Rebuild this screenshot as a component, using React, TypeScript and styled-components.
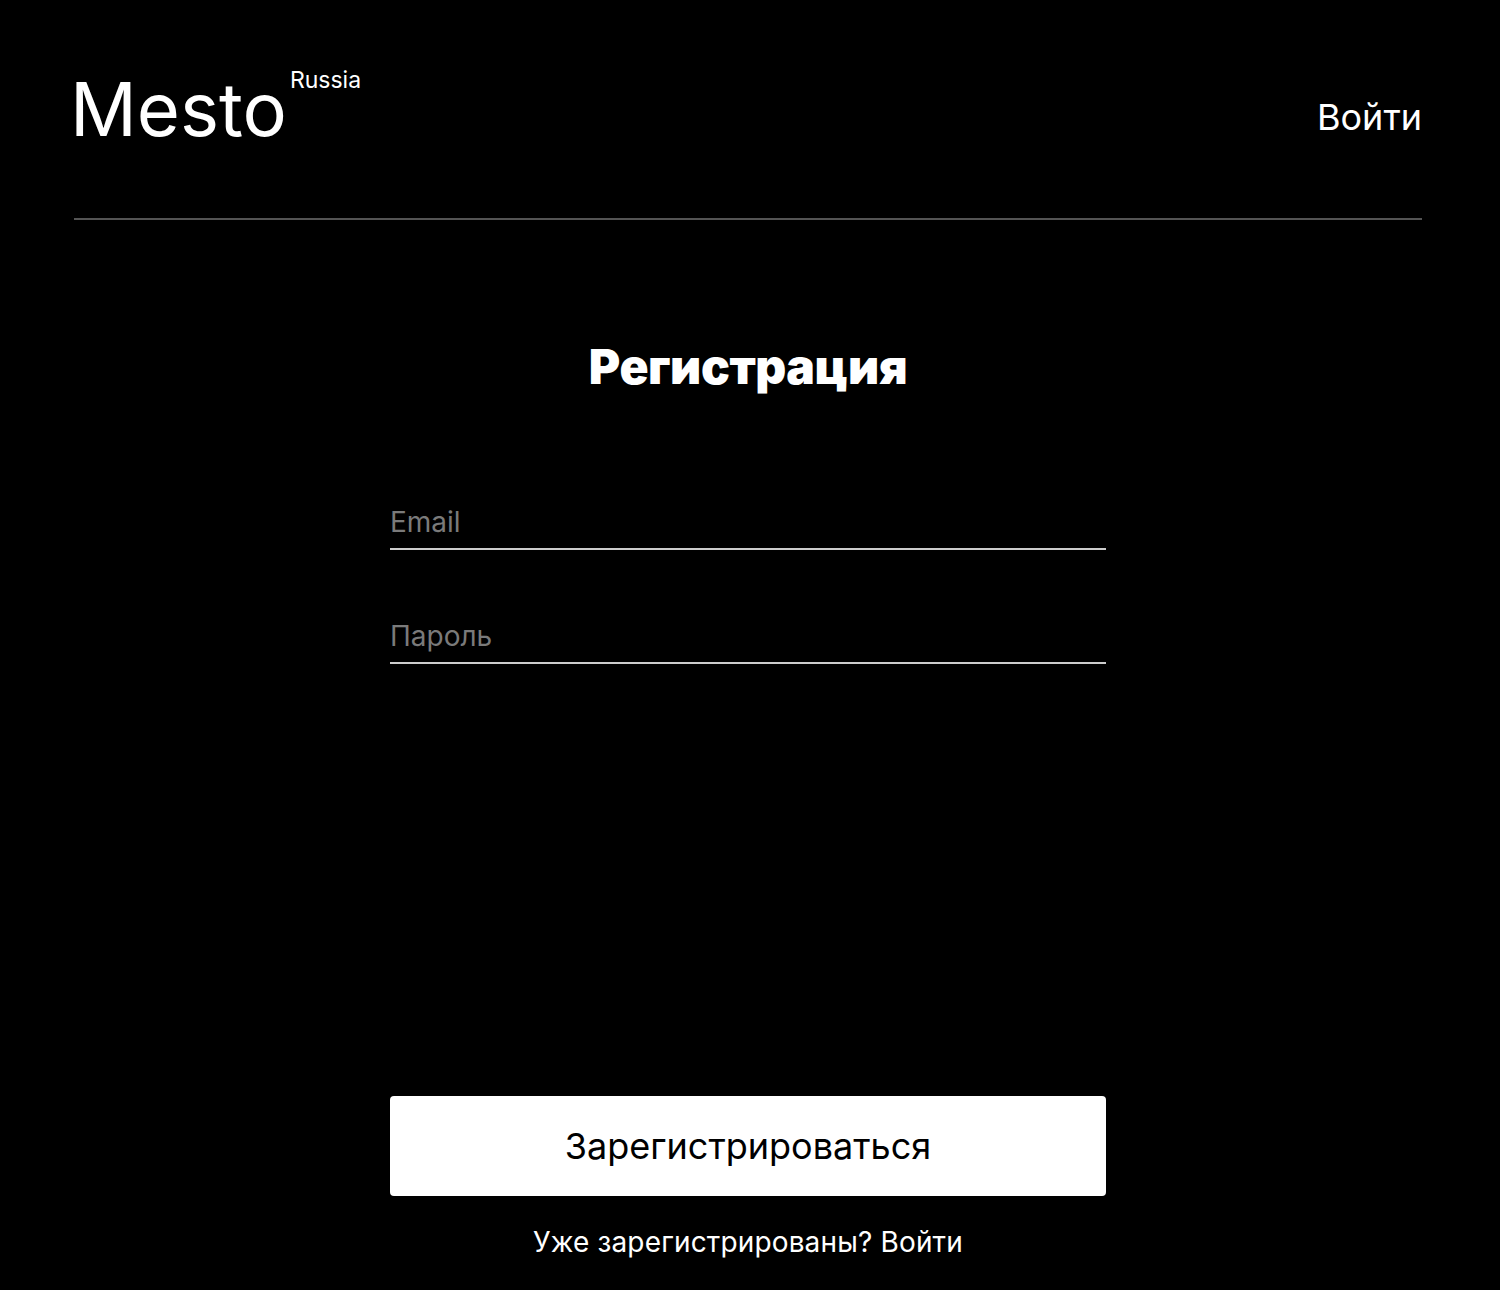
import React from "react";
import styled, { createGlobalStyle } from "styled-components";

const Global = createGlobalStyle`
  html, body { margin: 0; padding: 0; background: #000; }
  body { font-family: Inter, "Noto Sans", sans-serif; color: #fff; -webkit-font-smoothing: antialiased; }
  * { box-sizing: border-box; }
`;

const Page = styled.div`
  min-height: 1290px;
  background: #000;
  padding: 0 78px 0 74px;
`;

const Header = styled.header`
  display: flex;
  justify-content: space-between;
  align-items: flex-start;
  padding-top: 70px;
  padding-bottom: 72px;
  border-bottom: 2px solid #545454;
`;

const Logo = styled.div`
  display: flex;
  align-items: flex-start;
  margin-left: -4px;
`;

const LogoText = styled.span`
  font-size: 74px;
  line-height: 74px;
  font-weight: 400;
  margin-top: 2px;
`;

const LogoSup = styled.span`
  font-size: 23px;
  line-height: 23px;
  margin-top: -1px;
  margin-left: 3px;
`;

const HeaderLink = styled.a`
  color: #fff;
  text-decoration: none;
  font-size: 36px;
  line-height: 36px;
  margin-top: 29px;
`;

const Form = styled.form`
  width: 716px;
  margin: 0 auto;
  display: flex;
  flex-direction: column;
`;

const Title = styled.h1`
  margin: 123px 0 0;
  font-size: 48px;
  line-height: 48px;
  font-weight: 900;
  letter-spacing: -0.4px;
  text-align: center;
`;

const Input = styled.input<{ $first?: boolean }>`
  margin-top: ${(p) => (p.$first ? "114px" : "69px")};
  width: 100%;
  height: 45px;
  padding: 0 0 9px;
  background: transparent;
  border: none;
  border-bottom: 2px solid #ccc;
  color: #fff;
  font-family: inherit;
  font-size: 28px;
  line-height: 34px;
  outline: none;
  &::placeholder { color: #7a7a7a; }
`;

const Button = styled.button`
  margin-top: 432px;
  height: 100px;
  border: none;
  border-radius: 4px;
  background: #fff;
  color: #000;
  font-family: inherit;
  font-size: 36px;
  cursor: pointer;
`;

const Hint = styled.p`
  margin: 29px 0 0;
  text-align: center;
  font-size: 28px;
  line-height: 34px;
  letter-spacing: 0.15px;
`;

const HintLink = styled.a`
  color: #fff;
  text-decoration: none;
`;

export default function App() {
  return (
    <>
      <Global />
      <Page>
        <Header>
          <Logo>
            <LogoText>Mesto</LogoText>
            <LogoSup>Russia</LogoSup>
          </Logo>
          <HeaderLink href="#">Войти</HeaderLink>
        </Header>
        <Form onSubmit={(e) => e.preventDefault()}>
          <Title>Регистрация</Title>
          <Input $first type="email" placeholder="Email" />
          <Input type="password" placeholder="Пароль" />
          <Button type="submit">Зарегистрироваться</Button>
          <Hint>
            Уже зарегистрированы? <HintLink href="#">Войти</HintLink>
          </Hint>
        </Form>
      </Page>
    </>
  );
}
